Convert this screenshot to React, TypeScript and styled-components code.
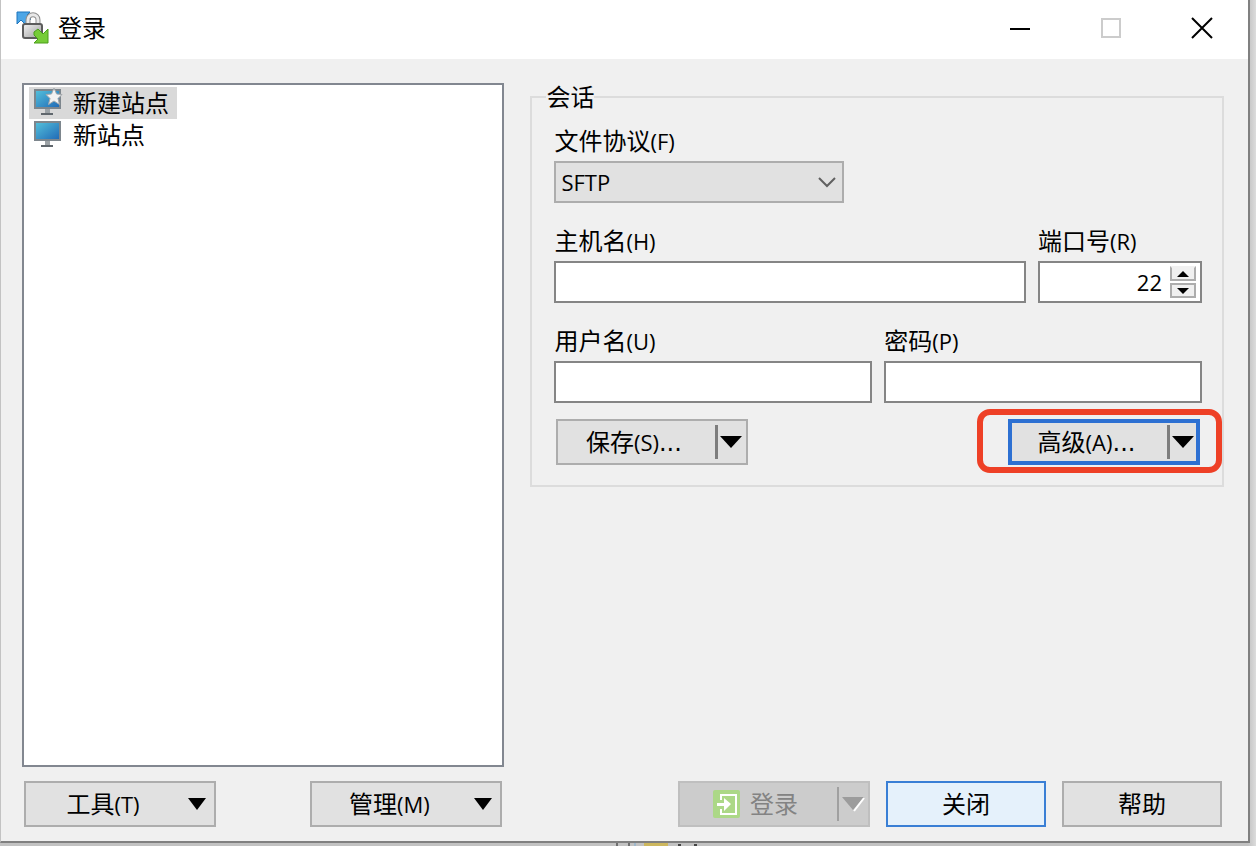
import React from "react";
import styled, { createGlobalStyle, css } from "styled-components";

const GlobalStyle = createGlobalStyle`
  *, *::before, *::after { box-sizing: border-box; }
  body { margin: 0; background: #cdcdcd; }
  body, button, input, select {
    font-family: "Open Sans", "Noto Sans CJK SC", sans-serif;
    font-size: 24px;
    line-height: 28px;
    color: #000;
  }
`;

const Desktop = styled.div`
  min-height: 100vh;
  display: flex;
  flex-direction: column;
  padding-right: 6px;
  background: linear-gradient(to left, #dcdcdc, #c2c2c2 8px);
`;

const Dialog = styled.main`
  flex: 1;
  display: flex;
  flex-direction: column;
  background: #f0f0f0;
  border: solid #808080;
  border-width: 0 2px 2px 0;
  border-left: 1px solid #c3c3c3;
`;

const TitleBar = styled.header`
  display: flex;
  align-items: center;
  height: 59px;
  padding: 0 1px 4px 15px;
  background: #fff;
`;

const Title = styled.h1`
  flex: 1;
  margin: 0 0 0 8px;
  font-size: 24px;
  font-weight: 400;
  line-height: 28px;
`;

const CaptionButton = styled.button`
  display: flex;
  align-items: center;
  justify-content: center;
  width: 91px;
  height: 55px;
  padding: 0;
  border: 0;
  background: transparent;
`;

const Body = styled.div`
  flex: 1;
  display: grid;
  grid-template-columns: minmax(0, 482fr) minmax(0, 693fr);
  grid-template-rows: 1fr auto;
  gap: 14px 26px;
  padding: 24px 24px 14px 21px;
`;

const SiteList = styled.ul`
  margin: 0;
  padding: 2px 5px;
  list-style: none;
  background: #fff;
  border: 2px solid #828790;
`;

const Site = styled.li<{ $selected?: boolean }>`
  display: flex;
  align-items: center;
  gap: 10px;
  width: max-content;
  height: 32px;
  padding: 0 8px 0 4px;
  background: ${(p) => (p.$selected ? "#d9d9d9" : "transparent")};
`;

const Session = styled.fieldset`
  align-self: start;
  min-width: 0;
  margin: 0;
  padding: 16px 20px 20px 22px;
  border: 2px solid #dcdcdc;
`;

const Legend = styled.legend`
  margin-left: -8px;
  padding: 0;
  height: 28px;
`;

const Fields = styled.div`
  display: flex;
  flex-direction: column;
  gap: 24px;
`;

const FieldRow = styled.div`
  display: flex;
  gap: 12px;
`;

const Field = styled.div<{ $width?: string }>`
  display: flex;
  flex-direction: column;
  gap: 6px;
  min-width: 0;
  flex: ${(p) => (p.$width ? `0 0 ${p.$width}` : "1 1 0")};
`;

const Label = styled.label`
  height: 28px;
  white-space: nowrap;
`;

const Latin = styled.span`
  font-size: 22px;
`;

const Dots = styled.span`
  font-family: "DejaVu Sans", sans-serif;
`;

const control = css`
  width: 100%;
  height: 42px;
  border: 2px solid #858585;
  border-radius: 0;
  background: #fff;
  font-size: 22px;
  outline: 0;
`;

const TextInput = styled.input`
  ${control}
  padding: 0 6px;
`;

const SelectBox = styled.div`
  position: relative;
  svg {
    position: absolute;
    right: 8px;
    top: 14px;
    pointer-events: none;
  }
`;

const Select = styled.select`
  ${control}
  appearance: none;
  padding: 0 32px 0 5px;
  background: #e1e1e1;
  border-color: #adadad;
`;

const Spinner = styled.div`
  ${control}
  display: flex;
  align-items: center;
  padding-right: 4px;
`;

const PortInput = styled.input`
  flex: 1;
  min-width: 0;
  padding: 0;
  border: 0;
  outline: 0;
  background: transparent;
  font-size: 22px;
  text-align: right;
`;

const SpinButtons = styled.div`
  display: flex;
  flex-direction: column;
  gap: 2px;
  margin-left: 8px;
`;

const SpinButton = styled.button<{ $up?: boolean }>`
  display: flex;
  align-items: center;
  justify-content: center;
  width: 26px;
  height: 15px;
  padding: 0;
  background: #f0f0f0;
  border: 2px solid #adadad;
  ${(p) => p.$up && "border-top-color: #f0f0f0;"}
`;

const Actions = styled.div`
  display: flex;
  justify-content: space-between;
  margin-top: 16px;
  padding: 0 2px;
`;

const Highlight = styled.div`
  position: relative;
  &::after {
    content: "";
    position: absolute;
    inset: -10px -22px -8px -31px;
    border: 6px solid #ee4026;
    border-radius: 13px;
    pointer-events: none;
  }
`;

type Tone = "normal" | "focus" | "primary" | "disabled";

const tones = {
  normal: css`background: #e1e1e1; border: 2px solid #adadad; color: #000;`,
  focus: css`background: #e1e1e1; border: 4px solid #2d70d2; color: #000;`,
  primary: css`background: #e5f1fb; border: 2px solid #3a7fd5; color: #000;`,
  disabled: css`background: #cccccc; border: 2px solid #bfbfbf; color: #838383;`,
};

const Button = styled.button<{ $tone?: Tone; $wide?: boolean }>`
  display: flex;
  align-items: center;
  height: 46px;
  width: ${(p) => (p.$wide ? 192 : 160)}px;
  padding: 0;
  white-space: nowrap;
  ${(p) => tones[p.$tone ?? "normal"]}
`;

const Caption = styled.span<{ $split?: boolean }>`
  flex: 1;
  display: flex;
  align-items: center;
  justify-content: center;
  gap: 10px;
  padding-right: ${(p) => (p.$split ? 6 : 0)}px;
`;

const CaptionText = styled.span``;

const MenuArrow = styled.span`
  display: flex;
  align-items: center;
  justify-content: flex-end;
  height: 34px;
  width: 34px;
  padding-right: 8px;
`;

const SplitArrow = styled.span<{ $focus?: boolean; $disabled?: boolean }>`
  display: flex;
  align-items: center;
  height: 34px;
  width: ${(p) => (p.$focus ? 29 : 31)}px;
  padding-left: 2px;
  border-left: ${(p) => (p.$disabled ? "2px solid #a0a0a0" : "3px solid #7d7d7d")};
`;

const Footer = styled.div<{ $end?: boolean }>`
  display: flex;
  gap: 16px;
  justify-content: ${(p) => (p.$end ? "flex-end" : "space-between")};
  padding: 0 2px;
`;

const Taskbar = styled.div`
  height: 3px;
  padding-left: 616px;
  svg { display: block; }
`;

const Down = ({ width = 22 }: { width?: number }) => (
  <svg width={width} height="12" viewBox="0 0 22 12" preserveAspectRatio="none" aria-hidden="true">
    <path d="M0 0H22L11 12Z" fill="currentColor" />
  </svg>
);

const Monitor = ({ star }: { star?: boolean }) => (
  <svg width="30" height="30" viewBox="0 0 30 30" aria-hidden="true">
    <defs>
      <linearGradient id="screen" x1="0" y1="0" x2="1" y2="1">
        <stop offset="0" stopColor="#55c3dc" />
        <stop offset="1" stopColor="#1f67b5" />
      </linearGradient>
    </defs>
    <path d="M12 21H17V25H12Z" fill="#9da3a7" />
    <path d="M8 25H20V27H8Z" fill="#60676d" />
    <rect x="2" y="2" width="25" height="18" fill="url(#screen)" stroke="#7d868d" strokeWidth="2" />
    {star && (
      <path
        d="M21 0L23.6 6L29 6.5L25 10.5L26.5 16.5L21 13L15.5 16.5L17 10.5L13 6.5L18.5 6Z"
        fill="#f2f2f2"
        stroke="#a3a8ac"
      />
    )}
  </svg>
);

const AppIcon = () => (
  <svg width="34" height="34" viewBox="0 0 34 34" aria-hidden="true">
    <defs>
      <linearGradient id="lock" x1="0" y1="0" x2="1" y2="1">
        <stop offset="0" stopColor="#f4f4f4" />
        <stop offset="1" stopColor="#9c9c9c" />
      </linearGradient>
    </defs>
    <path d="M1 1H14L11 4L15 8L9 13L5 9L1 13Z" fill="#4da6e6" stroke="#1c75bd" />
    <path d="M12 14V9C12 2 22 2 22 9V14" fill="none" stroke="#8f8f8f" strokeWidth="5" />
    <path d="M12 14V9C12 2 22 2 22 9V14" fill="none" stroke="#e8e8e8" strokeWidth="3" />
    <rect x="7" y="13" width="19" height="14" rx="2" fill="url(#lock)" stroke="#5c5c5c" strokeWidth="2" />
    <path d="M18 21L22 18L27 23L32 18V32H18L22 28L18 24Z" fill="#76cc38" stroke="#4b9e1b" />
  </svg>
);

const LoginIcon = () => (
  <svg width="27" height="28" viewBox="0 0 27 28" aria-hidden="true">
    <rect width="27" height="28" rx="2" fill="#acd887" />
    <path d="M8 10V5H23V24H8V19" fill="none" stroke="#fff" strokeWidth="2" />
    <path d="M4 13H11V8L18 14L11 21V16H4Z" fill="#fff" />
  </svg>
);

export default function App() {
  return (
    <>
      <GlobalStyle />
      <Desktop>
        <Dialog>
          <TitleBar>
            <AppIcon />
            <Title>登录</Title>
            <CaptionButton aria-label="最小化">
              <svg width="20" height="20" viewBox="0 0 20 20"><path d="M0 11H20" stroke="#000" strokeWidth="2" /></svg>
            </CaptionButton>
            <CaptionButton aria-label="最大化" disabled>
              <svg width="20" height="20" viewBox="0 0 20 20"><rect x="1" y="1" width="18" height="18" fill="none" stroke="#ccc" strokeWidth="2" /></svg>
            </CaptionButton>
            <CaptionButton aria-label="关闭窗口">
              <svg width="22" height="22" viewBox="0 0 22 22"><path d="M1 1L21 21M21 1L1 21" stroke="#000" strokeWidth="2" /></svg>
            </CaptionButton>
          </TitleBar>
          <Body>
            <SiteList>
              <Site $selected><Monitor star />新建站点</Site>
              <Site><Monitor />新站点</Site>
            </SiteList>
            <Session>
              <Legend>会话</Legend>
              <Fields>
                <FieldRow>
                  <Field $width="290px">
                    <Label htmlFor="protocol">文件协议<Latin>(F)</Latin></Label>
                    <SelectBox>
                      <Select id="protocol" defaultValue="SFTP"><option>SFTP</option></Select>
                      <svg width="18" height="14" viewBox="0 0 18 14" aria-hidden="true">
                        <path d="M1 3L9 11L17 3" fill="none" stroke="#606060" strokeWidth="2" />
                      </svg>
                    </SelectBox>
                  </Field>
                </FieldRow>
                <FieldRow>
                  <Field>
                    <Label htmlFor="host">主机名<Latin>(H)</Latin></Label>
                    <TextInput id="host" />
                  </Field>
                  <Field $width="164px">
                    <Label htmlFor="port">端口号<Latin>(R)</Latin></Label>
                    <Spinner>
                      <PortInput id="port" defaultValue="22" />
                      <SpinButtons>
                        <SpinButton $up aria-label="增加">
                          <svg width="12" height="6" viewBox="0 0 12 6"><path d="M0 6H12L6 0Z" /></svg>
                        </SpinButton>
                        <SpinButton aria-label="减少">
                          <svg width="12" height="6" viewBox="0 0 12 6"><path d="M0 0H12L6 6Z" /></svg>
                        </SpinButton>
                      </SpinButtons>
                    </Spinner>
                  </Field>
                </FieldRow>
                <FieldRow>
                  <Field>
                    <Label htmlFor="user">用户名<Latin>(U)</Latin></Label>
                    <TextInput id="user" />
                  </Field>
                  <Field>
                    <Label htmlFor="password">密码<Latin>(P)</Latin></Label>
                    <TextInput id="password" type="password" />
                  </Field>
                </FieldRow>
              </Fields>
              <Actions>
                <Button $wide>
                  <Caption $split><CaptionText>保存<Latin>(S)</Latin><Dots>...</Dots></CaptionText></Caption>
                  <SplitArrow><Down /></SplitArrow>
                </Button>
                <Highlight>
                  <Button $wide $tone="focus">
                    <Caption $split><CaptionText>高级<Latin>(A)</Latin><Dots>...</Dots></CaptionText></Caption>
                    <SplitArrow $focus><Down /></SplitArrow>
                  </Button>
                </Highlight>
              </Actions>
            </Session>
            <Footer>
              <Button $wide>
                <Caption><CaptionText>工具<Latin>(T)</Latin></CaptionText></Caption>
                <MenuArrow><Down width={18} /></MenuArrow>
              </Button>
              <Button $wide>
                <Caption><CaptionText>管理<Latin>(M)</Latin></CaptionText></Caption>
                <MenuArrow><Down width={18} /></MenuArrow>
              </Button>
            </Footer>
            <Footer $end>
              <Button $wide $tone="disabled" disabled>
                <Caption $split><LoginIcon />登录</Caption>
                <SplitArrow $disabled>
                  <svg width="25" height="18" viewBox="0 0 25 18" aria-hidden="true">
                    <path d="M1 2H23L12 15Z" fill="#9c9c9c" />
                    <path d="M23 3L13 16" stroke="#fff" strokeWidth="2" />
                  </svg>
                </SplitArrow>
              </Button>
              <Button $tone="primary"><Caption>关闭</Caption></Button>
              <Button><Caption>帮助</Caption></Button>
            </Footer>
          </Body>
        </Dialog>
        <Taskbar>
          <svg width="90" height="3" viewBox="0 0 90 3" aria-hidden="true">
            <path d="M1 0V3M13 0V3" stroke="#6f6f6f" strokeWidth="2" />
            <path d="M19 0V3" stroke="#9fb8cc" strokeWidth="2" />
            <rect x="28" width="24" height="3" fill="#cdb75e" />
            <path d="M62 2H65M78 2H81" stroke="#444" strokeWidth="2" />
          </svg>
        </Taskbar>
      </Desktop>
    </>
  );
}
